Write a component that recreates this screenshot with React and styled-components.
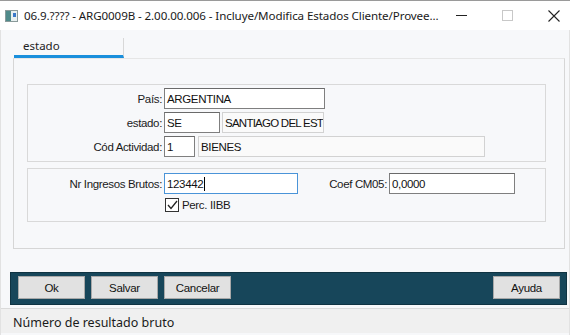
import React from "react";
import styled, { createGlobalStyle } from "styled-components";

const Global = createGlobalStyle`
  html, body {
    margin: 0;
    padding: 0;
    background: #ffffff;
  }
  * {
    box-sizing: border-box;
  }
`;

const Window = styled.div`
  width: 570px;
  height: 335px;
  display: flex;
  flex-direction: column;
  background: #f7f8fa;
  font-family: "Liberation Sans", Arial, sans-serif;
  overflow: hidden;
`;

const TitleBar = styled.div`
  height: 30px;
  flex: none;
  display: flex;
  align-items: center;
  background: #ffffff;
  padding-left: 5px;
  border-top: 1px solid #9a9a9a;
`;

const AppIcon = styled.svg`
  width: 13px;
  height: 12px;
  flex: none;
  margin-right: 6px;
`;

const Title = styled.span`
  flex: 1;
  font-family: "Noto Sans", "Open Sans", sans-serif;
  font-size: 11.6px;
  color: #1a1a1a;
  white-space: nowrap;
  letter-spacing: -0.1px;
`;

const Controls = styled.div`
  display: flex;
  align-items: center;
  height: 100%;
`;

const Control = styled.div`
  width: 46px;
  height: 100%;
  display: flex;
  align-items: center;
  justify-content: center;
`;

const Client = styled.div`
  flex: 1;
  display: flex;
  flex-direction: column;
  border-left: 1px solid #e2e2e2;
  border-right: 1px solid #e2e2e2;
`;

const TabStrip = styled.div`
  display: flex;
  padding: 8px 0 0 13px;
`;

const Tab = styled.div`
  width: 110px;
  height: 20px;
  padding: 0 0 0 9px;
  font-family: "Noto Sans", "Open Sans", sans-serif;
  font-size: 11.5px;
  color: #222;
  border-bottom: 3px solid #1a8fdc;
  border-right: 1px solid #d8d8d8;
`;

const Panel = styled.div`
  height: 191px;
  margin: 0 4px 0 12px;
  border: 1px solid #d6d6d6;
  border-top-color: #e6e6e6;
  padding: 25px 18px 0 13px;
  display: flex;
  flex-direction: column;
  gap: 6px;
`;

const Group = styled.div`
  height: ${(p) => p.h}px;
  border: 1px solid #d9d9d9;
  padding: 3px 0 0 0;
  display: flex;
  flex-direction: column;
  gap: ${(p) => p.gap || 3}px;
`;

const Row = styled.div`
  display: flex;
  align-items: center;
  height: ${(p) => p.h || 21}px;
`;

const Label = styled.span`
  width: ${(p) => p.w}px;
  flex: none;
  text-align: right;
  padding-right: 2px;
  font-size: 11.5px;
  color: #1a1a1a;
  letter-spacing: -0.35px;
`;

const Input = styled.div`
  width: ${(p) => p.w}px;
  height: ${(p) => p.h || 21}px;
  flex: none;
  margin-right: ${(p) => p.mr || 0}px;
  display: flex;
  align-items: center;
  padding-left: 2px;
  font-size: 11.5px;
  color: #111;
  letter-spacing: ${(p) => (p.condensed ? "-0.75px" : "-0.35px")};
  white-space: nowrap;
  overflow: hidden;
  background: ${(p) => (p.disabled ? "#fafafa" : "#ffffff")};
  border: 1px solid
    ${(p) => (p.focus ? "#4a94d8" : p.disabled ? "#d2d2d2" : "#7f7f7f")};
  border-top-color: ${(p) =>
    p.focus ? "#4a94d8" : p.disabled ? "#d2d2d2" : "#6a6a6a"};
`;

const Caret = styled.span`
  display: inline-block;
  width: 1px;
  height: 14px;
  background: #000;
  margin-left: 1px;
`;

const Check = styled.div`
  display: flex;
  align-items: center;
  gap: 3px;
  margin-left: 137px;
  font-size: 11.5px;
  color: #1a1a1a;
  letter-spacing: -0.35px;
`;

const Box = styled.div`
  width: 14px;
  height: 14px;
  border: 1px solid #333;
  background: #fff;
  display: flex;
  align-items: center;
  justify-content: center;
`;

const ButtonBar = styled.div`
  height: 33px;
  margin: 23px 2px 0 9px;
  background: #17465a;
  border: 1px solid #0f3342;
  padding: 3px 6px 0 7px;
  display: flex;
  gap: 6px;
`;

const Button = styled.button`
  width: 67px;
  height: 23px;
  margin-left: ${(p) => (p.right ? "auto" : "0")};
  background: #e1e1e1;
  border: 1px solid #a8a8a8;
  font-family: "Liberation Sans", Arial, sans-serif;
  font-size: 11.5px;
  color: #111;
  letter-spacing: -0.3px;
  padding: 0;
`;

const StatusBar = styled.div`
  flex: 1;
  margin-top: 3px;
  margin-bottom: 2px;
  background: #f0f0f0;
  border-top: 1px solid #dadada;
  padding: 5px 0 0 12px;
  font-family: "Noto Sans", "Open Sans", sans-serif;
  font-size: 12.5px;
  color: #1a1a1a;
`;

export default function App() {
  return (
    <>
      <Global />
      <Window>
        <TitleBar>
          <AppIcon viewBox="0 0 13 12">
            <rect x="0.5" y="0.5" width="12" height="11" fill="#e8f0f0" stroke="#8a9a9a" />
            <rect x="1" y="1" width="5" height="10" fill="#4f8a8a" />
            <rect x="8" y="3" width="3" height="4" fill="#3a78c8" />
          </AppIcon>
          <Title>
            06.9.???? - ARG0009B - 2.00.00.006 - Incluye/Modifica Estados Cliente/Provee...
          </Title>
          <Controls>
            <Control>
              <svg width="11" height="11" viewBox="0 0 11 11">
                <line x1="0" y1="5.5" x2="11" y2="5.5" stroke="#222" strokeWidth="1" />
              </svg>
            </Control>
            <Control>
              <svg width="11" height="11" viewBox="0 0 11 11">
                <rect x="0.5" y="0.5" width="10" height="10" fill="none" stroke="#c8c8c8" />
              </svg>
            </Control>
            <Control>
              <svg width="12" height="12" viewBox="0 0 12 12">
                <path d="M0.5 0.5 L11.5 11.5 M11.5 0.5 L0.5 11.5" stroke="#222" strokeWidth="1.1" />
              </svg>
            </Control>
          </Controls>
        </TitleBar>
        <Client>
          <TabStrip>
            <Tab>estado</Tab>
          </TabStrip>
          <Panel>
            <Group h={78}>
              <Row>
                <Label w={136}>País:</Label>
                <Input w={161}>ARGENTINA</Input>
              </Row>
              <Row>
                <Label w={136}>estado:</Label>
                <Input w={56} mr={2}>SE</Input>
                <Input w={102} disabled condensed>SANTIAGO DEL ESTE</Input>
              </Row>
              <Row>
                <Label w={136}>Cód Actividad:</Label>
                <Input w={31} mr={3}>1</Input>
                <Input w={287} disabled>BIENES</Input>
              </Row>
            </Group>
            <Group h={54} gap={4}>
              <Row style={{ marginTop: 1 }}>
                <Label w={136}>Nr Ingresos Brutos:</Label>
                <Input w={134} focus>
                  123442
                  <Caret />
                </Input>
                <Label w={91}>Coef CM05:</Label>
                <Input w={126}>0,0000</Input>
              </Row>
              <Check>
                <Box>
                  <svg width="11" height="10" viewBox="0 0 11 10">
                    <path d="M1 5 L4 8.5 L10 1" fill="none" stroke="#222" strokeWidth="1.3" />
                  </svg>
                </Box>
                Perc. IIBB
              </Check>
            </Group>
          </Panel>
          <ButtonBar>
            <Button>Ok</Button>
            <Button>Salvar</Button>
            <Button>Cancelar</Button>
            <Button right>Ayuda</Button>
          </ButtonBar>
          <StatusBar>Número de resultado bruto</StatusBar>
        </Client>
      </Window>
    </>
  );
}
